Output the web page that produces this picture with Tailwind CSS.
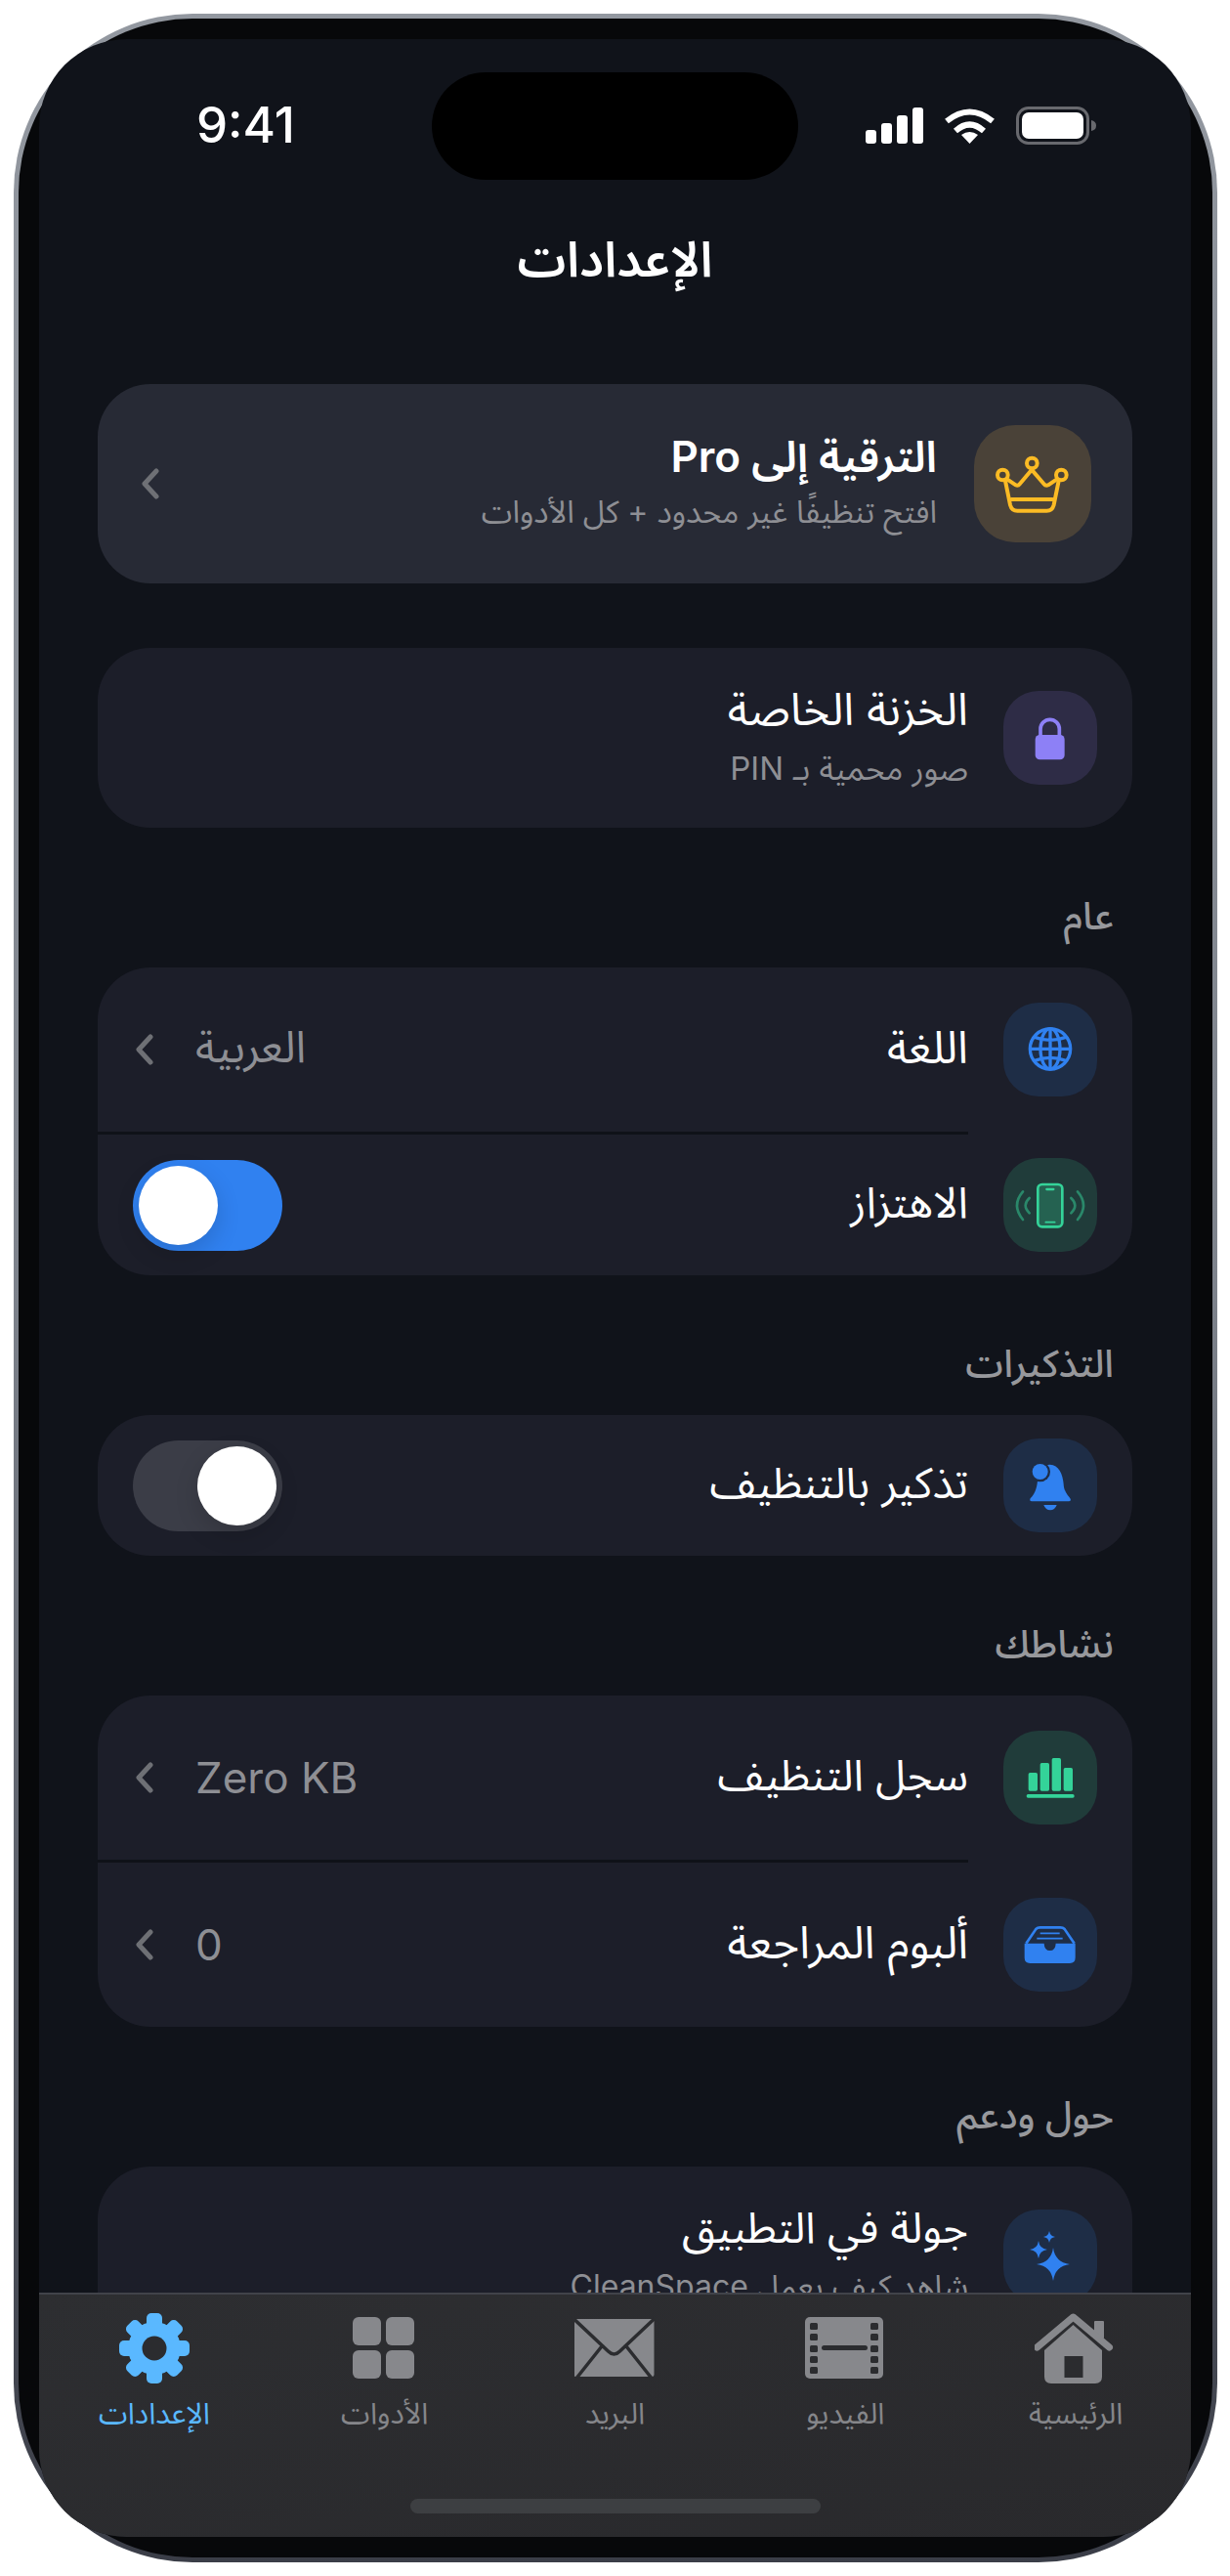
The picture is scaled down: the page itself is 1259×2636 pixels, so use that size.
<!DOCTYPE html>
<html lang="ar">
<head>
<meta charset="utf-8">
<script src="https://cdn.jsdelivr.net/npm/@tailwindcss/browser@4"></script>
</head>
<body class="bg-white m-0 font-['Inter','Noto_Sans_Arabic','DejaVu_Sans',sans-serif]">
<div class="ml-[14px] mt-[14px] w-[1232px] h-[2608px] rounded-[183px] p-[5px] bg-gradient-to-b from-[#9398a0] via-[#7e838c] to-[#3a3d47]">
<div class="w-full h-full rounded-[178px] bg-[#07080a] pt-[21px] pl-[21px]">
<div class="relative w-[1179px] h-[2556px] rounded-[90px] overflow-hidden bg-[#10131a] text-white">

  <!-- island -->
  <div class="absolute left-[402px] top-[34px] w-[375px] h-[110px] rounded-[55px] bg-black"></div>

  <!-- status bar -->
  <div class="flex items-center justify-between h-[128px] pt-[48px] pl-[161px] pr-[97px]">
    <span class="text-[51px] leading-[60px] font-medium">9:41</span>
    <div class="flex items-center gap-[22px]">
      <svg width="59" height="37" viewBox="0 0 59 37" fill="#fff"><rect x="0" y="23" width="11" height="14" rx="3"/><rect x="16" y="16" width="11" height="21" rx="3"/><rect x="32" y="8" width="11" height="29" rx="3"/><rect x="48" y="0" width="11" height="37" rx="3"/></svg>
      <svg width="51" height="37" viewBox="0 0 51 37" fill="none" stroke="#fff" stroke-width="6"><path d="M2 14 Q25.500 -5 49 14"/><path d="M11 24 Q25.500 11 40 24"/><path d="M25.500 37 L17 28 Q25.500 22 34 28 Z" fill="#fff" stroke="none"/></svg>
      <svg width="82" height="39" viewBox="0 0 82 39"><rect x="1.500" y="1.500" width="72" height="36" rx="11" fill="none" stroke="#68696e" stroke-width="3"/><rect x="6" y="6" width="63" height="27" rx="7" fill="#fff"/><path d="M77 14 Q82 15 82 19.500 Q82 24 77 25 Z" fill="#68696e"/></svg>
    </div>
  </div>

  <h1 dir="rtl" class="text-center text-[50px] leading-[66px] font-semibold mt-[64px]">الإعدادات</h1>

  <div dir="rtl" class="px-[60px] mt-[95px]">

    <!-- pro -->
    <div class="flex items-center gap-[38px] h-[204px] px-[42px] rounded-[54px] bg-[#272a35]">
      <div class="w-[120px] h-[120px] rounded-[42px] bg-[#4a4238] shrink-0">
        <svg width="120" height="120" viewBox="22 15 360 360" fill="none" stroke="#fbbb24" stroke-width="12" stroke-linecap="round" stroke-linejoin="round">
          <circle cx="200" cy="132" r="16"/><circle cx="110" cy="168" r="16"/><circle cx="290" cy="168" r="16"/>
          <path d="M118 186 L133 260 Q138 278 155 278 H245 Q262 278 267 260 L282 186"/>
          <path d="M128 184 L150 199 Q157 203 163 195 L199 152 L236 195 Q242 203 250 199 L272 184"/>
          <path d="M137 243 H263"/>
        </svg>
      </div>
      <div class="pb-[5px]">
        <div class="text-[44px] leading-[60px] font-semibold">الترقية إلى Pro</div>
        <div class="text-[32px] leading-[48px] text-[#8e8f94] mt-[3px]">افتح تنظيفًا غير محدود + كل الأدوات</div>
      </div>
      <svg class="mr-auto" width="21" height="32" viewBox="0 0 21 32" fill="none" stroke="#6e7075" stroke-width="5" stroke-linecap="round" stroke-linejoin="round"><path d="M18 3 L6 16 L18 29"/></svg>
    </div>

    <!-- vault -->
    <div class="flex items-center gap-[36px] p-[36px] mt-[66px] rounded-[54px] bg-[#1c1e29]">
      <div class="w-[96px] h-[96px] rounded-[36px] bg-[#2e2c46] shrink-0">
        <svg width="96" height="96" viewBox="112 830 288 288"><path d="M226 970 V947 a29 29 0 0 1 58 0 V970" fill="none" stroke="#8d80f6" stroke-width="11"/><rect x="210" y="965" width="90" height="76" rx="14" fill="#8d80f6"/></svg>
      </div>
      <div class="h-[112px] flex flex-col">
        <div class="text-[46px] leading-[52px] mb-[12px]">الخزنة الخاصة</div>
        <div class="text-[33px] leading-[46px] text-[#8e8f94]">صور محمية بـ PIN</div>
      </div>
    </div>

    <!-- general -->
    <div class="h-[53px] mt-[63px] mb-[27px] pr-[19px] text-[39px] leading-[53px] font-medium text-[#97989c]">عام</div>
    <div class="rounded-[54px] bg-[#1c1e29]">
      <div class="flex items-center gap-[36px] h-[168px] px-[36px]">
        <div class="w-[96px] h-[96px] rounded-[36px] bg-[#1e2d46] shrink-0">
          <svg width="96" height="96" viewBox="22 18 288 288" fill="none" stroke="#3081f0" stroke-width="10"><circle cx="166" cy="160" r="62"/><ellipse cx="166" cy="160" rx="30" ry="62"/><path d="M166 98 V222 M104 160 H228 M118 124 Q166 142 214 124 M118 196 Q166 178 214 196"/></svg>
        </div>
        <div class="text-[46px] leading-[62px] pb-[6px] box-content">اللغة</div>
        <div class="mr-auto flex items-center gap-[42px]">
          <span class="text-[45px] leading-[62px] pb-[6px] box-content text-[#8e8f94]">العربية</span>
          <svg width="22" height="32" viewBox="0 0 22 32" fill="none" stroke="#6e7075" stroke-width="5" stroke-linecap="round" stroke-linejoin="round"><path d="M18 3 L6 16 L18 29"/></svg>
        </div>
      </div>
      <div class="w-[891px] h-[3px] bg-[#0f1218] mr-auto"></div>
      <div class="flex items-center gap-[36px] h-[144px] px-[36px]">
        <div class="w-[96px] h-[96px] rounded-[36px] bg-[#203c3a] shrink-0">
          <svg width="96" height="96" viewBox="22 495 288 288" fill="none" stroke="#34d399" stroke-linecap="round"><rect x="128" y="576" width="75" height="130" rx="13" fill="#34d399" fill-opacity=".25" stroke-width="8"/><path d="M155 591 H176" stroke-width="7"/><path d="M152 692 H180" stroke-width="5"/><g stroke-opacity=".5" stroke-width="8"><path d="M82 598 Q46 640 82 684"/><path d="M102 618 Q78 640 102 664"/><path d="M250 598 Q286 640 250 684"/><path d="M230 618 Q254 640 230 664"/></g></svg>
        </div>
        <div class="text-[44px] leading-[62px] pb-[6px] box-content">الاهتزاز</div>
        <div class="mr-auto w-[153px] h-[93px] rounded-full bg-[#3081f0] p-[6px] flex justify-end" dir="rtl">
          <div class="w-[81px] h-[81px] rounded-full bg-white shadow-[0_9px_24px_rgba(0,0,0,0.15)]"></div>
        </div>
      </div>
    </div>

    <!-- reminders -->
    <div class="h-[53px] mt-[63px] mb-[27px] pr-[19px] text-[39px] leading-[53px] font-medium text-[#97989c]">التذكيرات</div>
    <div class="rounded-[54px] bg-[#1c1e29]">
      <div class="flex items-center gap-[36px] h-[144px] px-[36px]">
        <div class="w-[96px] h-[96px] rounded-[36px] bg-[#1e2d46] shrink-0">
          <svg width="96" height="96" viewBox="22 20 288 288"><path d="M165 100 C192 100 205 130 207 160 C208 185 222 195 228 205 Q231 213 222 213 H110 Q101 213 105 204 C118 190 125 175 127 150 C129 120 145 100 165 100 Z" fill="#3081f0"/><circle cx="135" cy="122" r="31" fill="#1e2d46"/><circle cx="135" cy="122" r="24" fill="#3081f0"/><path d="M146 224 H186 Q180 240 166 240 Q152 240 146 224 Z" fill="#3081f0"/></svg>
        </div>
        <div class="text-[44px] leading-[62px] pb-[6px] box-content">تذكير بالتنظيف</div>
        <div class="mr-auto w-[153px] h-[93px] rounded-full bg-[#3b3d47] p-[6px] flex justify-start" dir="rtl">
          <div class="w-[81px] h-[81px] rounded-full bg-white shadow-[0_9px_24px_rgba(0,0,0,0.15)]"></div>
        </div>
      </div>
    </div>

    <!-- activity -->
    <div class="h-[53px] mt-[63px] mb-[27px] pr-[19px] text-[39px] leading-[53px] font-medium text-[#97989c]">نشاطك</div>
    <div class="rounded-[54px] bg-[#1c1e29]">
      <div class="flex items-center gap-[36px] h-[168px] px-[36px]">
        <div class="w-[96px] h-[96px] rounded-[36px] bg-[#203c3a] shrink-0">
          <svg width="96" height="96" viewBox="22 34 288 288" fill="#34d399"><rect x="99" y="163" width="28" height="56" rx="5"/><rect x="135" y="133" width="28" height="86" rx="5"/><rect x="171" y="118" width="28" height="101" rx="5"/><rect x="207" y="148" width="28" height="71" rx="5"/><rect x="93" y="229" width="147" height="11" rx="5"/></svg>
        </div>
        <div class="text-[44px] leading-[62px] pb-[6px] box-content">سجل التنظيف</div>
        <div class="mr-auto flex items-center gap-[42px]">
          <span dir="ltr" class="text-[44px] leading-[62px] text-[#8e8f94]">Zero KB</span>
          <svg width="22" height="32" viewBox="0 0 22 32" fill="none" stroke="#6e7075" stroke-width="5" stroke-linecap="round" stroke-linejoin="round"><path d="M18 3 L6 16 L18 29"/></svg>
        </div>
      </div>
      <div class="w-[891px] h-[3px] bg-[#0f1218] mr-auto"></div>
      <div class="flex items-center gap-[36px] h-[168px] px-[36px]">
        <div class="w-[96px] h-[96px] rounded-[36px] bg-[#1e2d46] shrink-0">
          <svg width="96" height="96" viewBox="22 546 288 288"><path d="M92 686 L122 642 Q127 637 135 637 H197 Q205 637 210 642 L240 686" fill="none" stroke="#3081f0" stroke-width="8"/><path d="M135 655 H195 M125 671 H204" stroke="#3081f0" stroke-width="5"/><path d="M87 686 H147 Q148 708 165 708 Q182 708 183 686 H243 V730 Q243 747 226 747 H104 Q87 747 87 730 Z" fill="#3081f0"/></svg>
        </div>
        <div class="text-[46px] leading-[62px] pb-[6px] box-content">ألبوم المراجعة</div>
        <div class="mr-auto flex items-center gap-[42px]">
          <span class="text-[44px] leading-[62px] text-[#8e8f94]">0</span>
          <svg width="22" height="32" viewBox="0 0 22 32" fill="none" stroke="#6e7075" stroke-width="5" stroke-linecap="round" stroke-linejoin="round"><path d="M18 3 L6 16 L18 29"/></svg>
        </div>
      </div>
    </div>

    <!-- about -->
    <div class="h-[53px] mt-[63px] mb-[27px] pr-[19px] text-[39px] leading-[53px] font-medium text-[#97989c]">حول ودعم</div>
    <div class="rounded-[54px] bg-[#1c1e29]">
      <div class="flex items-center gap-[36px] p-[36px]">
        <div class="w-[96px] h-[96px] rounded-[36px] bg-[#1e2d46] shrink-0">
          <svg width="96" height="96" viewBox="0 0 96 96" fill="#3081f0"><path d="M51 39 Q53 54 68 56 Q53 58 51 73 Q49 58 34 56 Q49 54 51 39 Z"/><path d="M36 32 Q37 40 45 41 Q37 42 36 50 Q35 42 27 41 Q35 40 36 32 Z"/><path d="M47 22 Q47.700 27.300 53 28 Q47.700 28.700 47 34 Q46.300 28.700 41 28 Q46.300 27.300 47 22 Z"/></svg>
        </div>
        <div class="h-[112px] flex flex-col">
          <div class="text-[44px] leading-[52px] mb-[12px]">جولة في التطبيق</div>
          <div class="text-[32px] leading-[46px] text-[#8e8f94]">شاهد كيف يعمل CleanSpace</div>
        </div>
      </div>
    </div>
  </div>

  <!-- tab bar -->
  <div dir="rtl" class="absolute left-0 right-0 bottom-0 h-[250px] border-t-2 border-[#41434a] bg-gradient-to-br from-[#2d2e31] to-[#29292c] pt-[19px]">
    <div class="grid grid-cols-5 text-[30px] leading-[44px] text-[#85868a]">
      <div class="flex flex-col items-center">
        <svg class="h-[72px] w-[84px]" viewBox="2 0 84 72" fill="#87888c"><path d="M12 38 L41.500 12 L71 38 V65 Q71 72 64 72 H19 Q12 72 12 65 Z"/><rect x="63" y="8" width="10" height="18" rx="1"/><path d="M4.500 35 L41.500 4 L78.500 35" fill="none" stroke="#87888c" stroke-width="7" stroke-linecap="round" stroke-linejoin="round"/><rect x="32.500" y="44" width="19" height="22" fill="#2b2c2f"/></svg>
        <span class="mt-[8px]">الرئيسية</span>
      </div>
      <div class="flex flex-col items-center">
        <svg class="h-[72px] w-[84px]" viewBox="1 0 84 72" fill="#87888c"><rect x="2" y="4" width="80" height="63" rx="5"/><g fill="#2b2c2f"><rect x="7" y="10" width="8" height="7" rx="1.500"/><rect x="7" y="21" width="8" height="7" rx="1.500"/><rect x="7" y="33" width="8" height="7" rx="1.500"/><rect x="7" y="44" width="8" height="7" rx="1.500"/><rect x="7" y="55" width="8" height="7" rx="1.500"/><rect x="69" y="10" width="8" height="7" rx="1.500"/><rect x="69" y="21" width="8" height="7" rx="1.500"/><rect x="69" y="33" width="8" height="7" rx="1.500"/><rect x="69" y="44" width="8" height="7" rx="1.500"/><rect x="69" y="55" width="8" height="7" rx="1.500"/><rect x="19" y="33" width="47" height="5" rx="2.500"/></g></svg>
        <span class="mt-[8px]">الفيديو</span>
      </div>
      <div class="flex flex-col items-center">
        <svg class="h-[72px] w-[84px]" viewBox="1.500 0 84 72"><rect x="1" y="6" width="82" height="59" rx="2" fill="#87888c"/><path d="M1 6 L36 39 Q42 45 48 39 L83 6 M4 66 L31 32 M80 66 L53 32" fill="none" stroke="#2b2c2f" stroke-width="3.500"/></svg>
        <span class="mt-[8px]">البريد</span>
      </div>
      <div class="flex flex-col items-center">
        <svg class="h-[72px] w-[84px]" viewBox="1 0 84 72" fill="#87888c"><rect x="10" y="4" width="29" height="29" rx="6"/><rect x="44" y="4" width="29" height="29" rx="6"/><rect x="10" y="38" width="29" height="29" rx="6"/><rect x="44" y="38" width="29" height="29" rx="6"/></svg>
        <span class="mt-[8px]">الأدوات</span>
      </div>
      <div class="flex flex-col items-center text-[#5ab8ff]">
        <svg class="h-[72px] w-[72px]" viewBox="0 0 72 72" fill="#5ab8ff"><circle cx="36" cy="36" r="27"/><g><rect x="28" y="0" width="16" height="72" rx="5"/><rect x="28" y="0" width="16" height="72" rx="5" transform="rotate(45 36 36)"/><rect x="28" y="0" width="16" height="72" rx="5" transform="rotate(90 36 36)"/><rect x="28" y="0" width="16" height="72" rx="5" transform="rotate(135 36 36)"/></g><circle cx="36" cy="36" r="12.500" fill="#2b2c2f"/></svg>
        <span class="mt-[8px]">الإعدادات</span>
      </div>
    </div>
    <div class="absolute left-[380px] bottom-[24px] w-[420px] h-[15px] rounded-full bg-[#3d3f42]"></div>
  </div>
</div>
</div>
</div>
</body>
</html>
